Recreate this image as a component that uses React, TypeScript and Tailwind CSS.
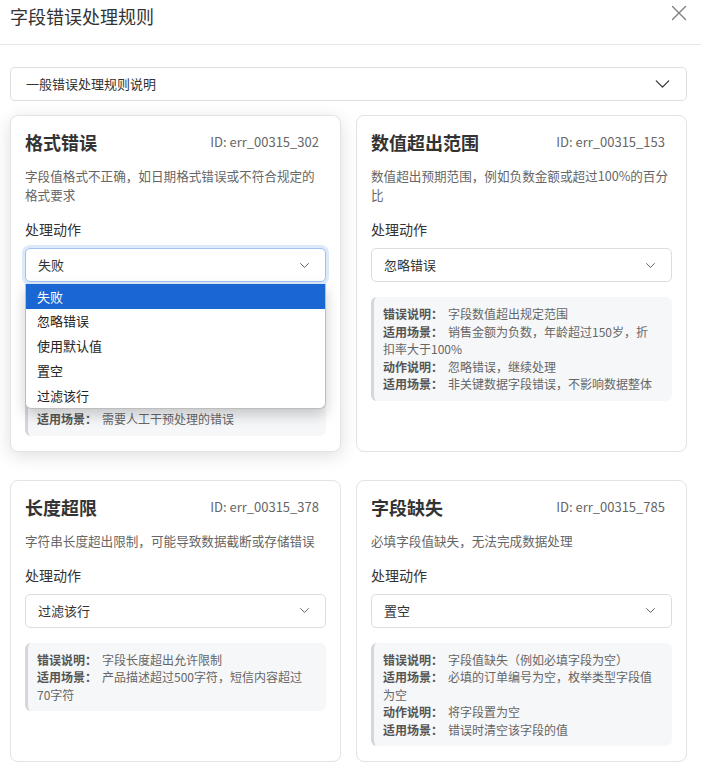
import React from "react";

type InfoLine = { label: string; text: string };

type Rule = {
  title: string;
  id: string;
  desc: string;
  action: string;
  info: InfoLine[];
  open?: boolean;
};

const rules: Rule[] = [
  {
    title: "格式错误",
    id: "ID: err_00315_302",
    desc: "字段值格式不正确，如日期格式错误或不符合规定的格式要求",
    action: "失败",
    open: true,
    info: [
      { label: "错误说明：", text: "字段值格式与规定的格式不匹配，无法正常解析该字段" },
      { label: "适用场景：", text: "日期格式为2023/13/45，手机号包含字母或特殊字符" },
      { label: "动作说明：", text: "标记该记录为失败，中止处理并记录详细错误信息" },
      { label: "适用场景：", text: "需要人工干预处理的错误" },
    ],
  },
  {
    title: "数值超出范围",
    id: "ID: err_00315_153",
    desc: "数值超出预期范围，例如负数金额或超过100%的百分比",
    action: "忽略错误",
    info: [
      { label: "错误说明：", text: "字段数值超出规定范围" },
      { label: "适用场景：", text: "销售金额为负数，年龄超过150岁，折扣率大于100%" },
      { label: "动作说明：", text: "忽略错误，继续处理" },
      { label: "适用场景：", text: "非关键数据字段错误，不影响数据整体" },
    ],
  },
  {
    title: "长度超限",
    id: "ID: err_00315_378",
    desc: "字符串长度超出限制，可能导致数据截断或存储错误",
    action: "过滤该行",
    info: [
      { label: "错误说明：", text: "字段长度超出允许限制" },
      { label: "适用场景：", text: "产品描述超过500字符，短信内容超过70字符" },
    ],
  },
  {
    title: "字段缺失",
    id: "ID: err_00315_785",
    desc: "必填字段值缺失，无法完成数据处理",
    action: "置空",
    info: [
      { label: "错误说明：", text: "字段值缺失（例如必填字段为空）" },
      { label: "适用场景：", text: "必填的订单编号为空，枚举类型字段值为空" },
      { label: "动作说明：", text: "将字段置为空" },
      { label: "适用场景：", text: "错误时清空该字段的值" },
    ],
  },
];

const options = ["失败", "忽略错误", "使用默认值", "置空", "过滤该行"];

function Chevron({ className }: { className?: string }) {
  return (
    <svg viewBox="0 0 16 9" fill="none" className={className}>
      <path d="M1 1l7 7 7-7" stroke="currentColor" strokeWidth="1.4" strokeLinecap="round" strokeLinejoin="round" />
    </svg>
  );
}

function RuleCard({ rule }: { rule: Rule }) {
  return (
    <div
      className={
        "rounded-lg border border-[#e2e3e6] bg-white px-[14px] pt-[14px] pb-[15px] " +
        (rule.open ? "relative z-10 shadow-[0_4px_18px_rgba(0,0,0,0.13)]" : "")
      }
    >
      {/* title row */}
      <div className="flex h-6 items-center justify-between pr-[7px]">
        <h3 className="text-[18px] leading-6 font-bold text-[#333]">{rule.title}</h3>
        <span className="text-[13px] leading-6 text-[#666]">{rule.id}</span>
      </div>
      <p className="mt-3 text-[12.6px] leading-[19px] text-[#666]">{rule.desc}</p>
      <div className="mt-[15px] text-[14px] leading-5 text-[#333]">处理动作</div>

      {/* select */}
      <div className="relative mt-[9px]">
        <div
          className={
            "flex h-[34px] items-center justify-between rounded-[5px] border bg-white pr-[16px] pl-[12px] text-[13px] text-[#333] " +
            (rule.open
              ? "border-[#9fc2f0] ring-[3px] ring-[#dce9fb]"
              : "border-[#dcdde0]")
          }
        >
          <span>{rule.action}</span>
          <Chevron className="h-[5px] w-[9px] text-[#333]" />
        </div>
        {rule.open && (
          <ul className="absolute top-[36px] right-0 left-0 z-20 overflow-hidden rounded-b-[6px] border border-t-0 border-[#bdbdbd] bg-white shadow-[0_6px_14px_rgba(0,0,0,0.2)]">
            {options.map((o, i) => (
              <li
                key={o}
                className={
                  "flex h-[24.8px] items-center pl-[11px] text-[13px] " +
                  (i === 0 ? "bg-[#1a66d2] text-white" : "text-[#222]")
                }
              >
                {o}
              </li>
            ))}
          </ul>
        )}
      </div>

      {/* info box */}
      <div className="mt-[15px] rounded-[6px] border-l-[3px] border-[#d3d6db] bg-[#f6f7f9] py-2 pr-4 pl-[9px] text-[12px] leading-[17.5px] text-[#666]">
        {rule.info.map((l, i) => (
          <div key={i}>
            <span className="mr-[5px] font-bold text-[#555]">{l.label}</span>
            {l.text}
          </div>
        ))}
      </div>
    </div>
  );
}

export default function App() {
  return (
    <div
      className="min-h-screen w-[701px] bg-white"
      style={{ fontFamily: '"Noto Sans CJK SC", "Noto Sans", sans-serif' }}
    >
      {/* Header */}
      <div className="flex h-[45px] items-start justify-between border-b border-[#e8e8e8] pt-1 pr-[14px] pl-[10px]">
        <h2 className="text-[18px] leading-6 text-[#333]">字段错误处理规则</h2>
        <button className="mt-[1px] text-[#808080]">
          <svg viewBox="0 0 16 16" className="h-[16px] w-[16px]" fill="none">
            <path d="M1.5 1.5l13 13M14.5 1.5l-13 13" stroke="currentColor" strokeWidth="1.4" strokeLinecap="round" />
          </svg>
        </button>
      </div>

      <div className="pt-[22px] pr-[14px] pl-[10px]">
        {/* accordion */}
        <div className="flex h-[34px] items-center justify-between rounded-[5px] border border-[#dcdde0] pr-[16px] pl-[15px]">
          <span className="text-[13px] text-[#333]">一般错误处理规则说明</span>
          <Chevron className="h-[8px] w-[15px] text-[#333]" />
        </div>

        {/* rule cards */}
        <div className="mt-[14px] grid grid-cols-2 items-stretch gap-x-[15px] gap-y-[28px]">
          {rules.map((r) => (
            <RuleCard key={r.id} rule={r} />
          ))}
        </div>
        <div className="h-4" />
      </div>
    </div>
  );
}
